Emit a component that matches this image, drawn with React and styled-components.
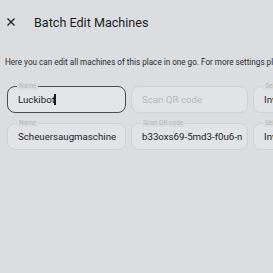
import React from "react";
import styled, { createGlobalStyle } from "styled-components";

const Global = createGlobalStyle`
    html, body {
        margin: 0;
        padding: 0;
        background: #dcdde1;
        overflow: hidden;
    }
    body {
        font-family: Roboto, "Noto Sans", sans-serif;
        color: #1f1f22;
    }
`;

const Page = styled.div`
    width: 273px;
    height: 273px;
    overflow: hidden;
`;

const Header = styled.header`
    display: flex;
    align-items: center;
    height: 44px;
    padding-left: 7px;
    gap: 19px;
`;

const CloseButton = styled.button`
    display: flex;
    align-items: center;
    justify-content: center;
    padding: 0;
    border: none;
    background: none;
    width: 8px;
    height: 8px;
    cursor: pointer;
`;

const Title = styled.h1`
    margin: 0;
    font-size: 12.6px;
    font-weight: 400;
    color: #1d1d20;
`;

const Description = styled.p`
    margin: 12px 0 0 5px;
    font-size: 8.15px;
    line-height: 12px;
    white-space: nowrap;
    color: #2a2a2e;
`;

const Rows = styled.div`
    display: flex;
    flex-direction: column;
    gap: 10px;
    margin-top: 18px;
    padding-left: 7px;
`;

const Row = styled.div`
    display: flex;
    gap: 5px;
`;

const Field = styled.div`
    position: relative;
    flex: 0 0 auto;
    box-sizing: border-box;
    width: ${(p) => p.$width || 119}px;
    height: 27px;
    border-radius: 8px;
    border: 1px solid ${(p) => (p.$focused ? "#4a4a50" : "#cfd0d4")};
    background: ${(p) => (p.$focused ? "#e4e5e8" : "#e2e3e6")};
    display: flex;
    align-items: center;
    padding-left: 10px;
`;

const Label = styled.span`
    position: absolute;
    top: -4px;
    left: 9px;
    padding: 0 2px;
    font-size: 6.5px;
    line-height: 7px;
    color: #b4b5ba;
    background: #dcdde1;
    white-space: nowrap;
`;

const Value = styled.span`
    font-size: 9.7px;
    color: ${(p) => (p.$placeholder ? "#b6b7bc" : "#222226")};
    white-space: nowrap;
    overflow: hidden;
`;

const Caret = styled.span`
    display: inline-block;
    width: 2px;
    height: 11px;
    margin-left: -1px;
    vertical-align: -2px;
    background: #1a1a1d;
`;

const fields = [
    [
        { label: "Name", value: "Luckibot", focused: true },
        { label: null, value: "Scan QR code", placeholder: true },
        { label: "Select", value: "Inventory" },
    ],
    [
        { label: "Name", value: "Scheuersaugmaschine" },
        { label: "Scan QR code", value: "b33oxs69-5md3-f0u6-n" },
        { label: "Select", value: "Inventory" },
    ],
];

export default function App() {
    return (
        <Page>
            <Global />
            <Header>
                <CloseButton aria-label="Close">
                    <svg width="8" height="8" viewBox="0 0 8 8">
                        <path d="M0.5 0.5L7.5 7.5M7.5 0.5L0.5 7.5" stroke="#222" strokeWidth="1.3" />
                    </svg>
                </CloseButton>
                <Title>Batch Edit Machines</Title>
            </Header>
            <Description>
                Here you can edit all machines of this place in one go. For more settings please open the machine.
            </Description>
            <Rows>
                {fields.map((row, i) => (
                    <Row key={i}>
                        {row.map((f, j) => (
                            <Field key={j} $focused={f.focused} $width={j === 1 ? 117 : 119}>
                                {f.label && <Label>{f.label}</Label>}
                                <Value $placeholder={f.placeholder}>
                                    {f.value}
                                    {f.focused && <Caret />}
                                </Value>
                            </Field>
                        ))}
                    </Row>
                ))}
            </Rows>
        </Page>
    );
}
